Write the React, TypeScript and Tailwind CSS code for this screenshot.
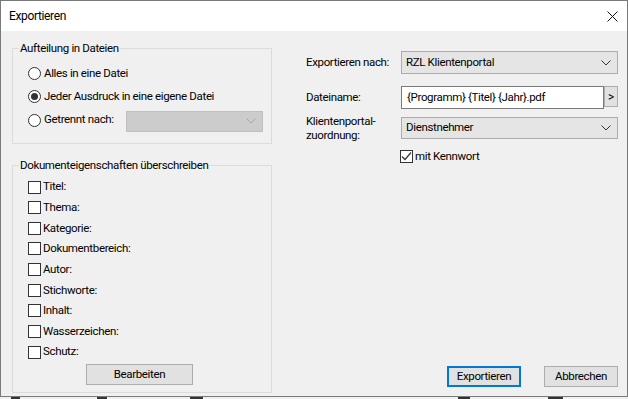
import React from 'react';

const font = { fontFamily: 'Roboto, "Liberation Sans", sans-serif' };

const Chevron: React.FC<{ color?: string }> = ({ color = '#333' }) => (
  <svg width="10" height="6" viewBox="0 0 10 6" className="shrink-0">
    <polyline points="0.5,0.5 5,5 9.5,0.5" fill="none" stroke={color} strokeWidth="1" />
  </svg>
);

const Radio: React.FC<{ checked?: boolean; label: string }> = ({ checked, label }) => (
  <div className="flex items-center gap-[3px]">
    <span className="w-[13px] h-[13px] rounded-full border border-[#333] bg-white flex items-center justify-center shrink-0">
      {checked && <span className="w-[7px] h-[7px] rounded-full bg-[#333]" />}
    </span>
    <span>{label}</span>
  </div>
);

const Check: React.FC<{ checked?: boolean; label: string }> = ({ checked, label }) => (
  <div className="flex items-center gap-[2px]">
    <span className="w-[13px] h-[13px] border border-[#333] bg-white shrink-0 flex items-center justify-center">
      {checked && (
        <svg width="11" height="11" viewBox="0 0 11 11">
          <polyline points="1,5.5 4,8.5 10,1.5" fill="none" stroke="#333" strokeWidth="1.2" />
        </svg>
      )}
    </span>
    <span>{label}</span>
  </div>
);

const props = ['Titel:', 'Thema:', 'Kategorie:', 'Dokumentbereich:', 'Autor:', 'Stichworte:', 'Inhalt:', 'Wasserzeichen:', 'Schutz:'];

const App: React.FC = () => {
  return (
    <div className="w-[628px] h-[399px] bg-[#f0f0f0] text-[11.5px] tracking-[-0.35px] text-black flex flex-col" style={font}>
      <div className="h-[397px] border border-[#7a7a7a] flex flex-col">
        {/* Title bar */}
        <div className="h-[30px] bg-white flex items-center justify-between pl-[8px] pr-[9px] text-[12px]">
          <span>Exportieren</span>
          <svg width="11" height="11" viewBox="0 0 11 11">
            <path d="M0.5 0.5 L10.5 10.5 M10.5 0.5 L0.5 10.5" stroke="#111" strokeWidth="1" />
          </svg>
        </div>

        <div className="flex-1 flex bg-[#f0f0f0]">
          {/* Left column */}
          <div className="pl-[11px] w-[271px] flex flex-col">
            <div className="relative mt-[17px] h-[96px] border border-[#dcdcdc] pt-[13px] pl-[15px]">
              <span className="absolute -top-[8px] left-[6px] px-[1px] bg-[#f0f0f0] leading-[15px]">Aufteilung in Dateien</span>
              <div className="h-[23px] flex items-center"><Radio label="Alles in eine Datei" /></div>
              <div className="h-[23px] flex items-center"><Radio checked label="Jeder Ausdruck in eine eigene Datei" /></div>
              <div className="h-[24px] flex items-center">
                <div className="w-[98px]"><Radio label="Getrennt nach:" /></div>
                <div className="mt-[2px] w-[137px] h-[21px] bg-[#cccccc] border border-[#bfbfbf] flex items-center justify-end pr-[6px]">
                  <Chevron color="#a6a6a6" />
                </div>
              </div>
            </div>

            <div className="relative mt-[21px] h-[228px] border border-[#dcdcdc] pt-[10.7px] pl-[15px] flex flex-col">
              <span className="absolute -top-[8px] left-[6px] px-[1px] bg-[#f0f0f0] leading-[15px]">Dokumenteigenschaften überschreiben</span>
              {props.map(p => (
                <div key={p} className="h-[20.625px] flex items-center"><Check label={p} /></div>
              ))}
              <button className="mt-[2px] ml-[58px] w-[107px] h-[21px] bg-[#e1e1e1] border border-[#adadad] flex items-center justify-center">
                Bearbeiten
              </button>
            </div>
          </div>

          {/* Right column */}
          <div className="flex-1 flex flex-col pl-[34px] pr-[9px] pb-[9px]">
            <div className="mt-[20px] flex items-center">
              <span className="w-[95px]">Exportieren nach:</span>
              <div className="flex-1 h-[23px] bg-[#e5e5e5] border border-[#acacac] flex items-center justify-between pl-[4px] pr-[6px]">
                <span>RZL Klientenportal</span>
                <Chevron />
              </div>
            </div>

            <div className="mt-[12px] flex items-center">
              <span className="w-[95px]">Dateiname:</span>
              <div className="flex-1 h-[23px] bg-white border border-[#7a7a7a] flex items-center pl-[5px]">
                {'{Programm} {Titel} {Jahr}.pdf'}
              </div>
              <div className="w-[14px] h-[21px] self-start bg-[#e1e1e1] border border-[#adadad] flex items-center justify-center text-[12px]">&gt;</div>
            </div>

            <div className="mt-[8px] flex items-start">
              <span className="w-[95px] leading-[14px] -mt-[3px]">Klientenportal-<br />zuordnung:</span>
              <div className="flex-1 h-[22px] bg-[#e5e5e5] border border-[#acacac] flex items-center justify-between pl-[4px] pr-[6px]">
                <span>Dienstnehmer</span>
                <Chevron />
              </div>
            </div>

            <div className="mt-[8px] pl-[94px] h-[13px] flex items-center">
              <Check checked label="mit Kennwort" />
            </div>

            <div className="mt-auto flex justify-end gap-[23px]">
              <button className="w-[74px] h-[21px] bg-[#e1e1e1] border-2 border-[#0078d7] flex items-center justify-center">Exportieren</button>
              <button className="w-[74px] h-[21px] bg-[#e1e1e1] border border-[#adadad] flex items-center justify-center">Abbrechen</button>
            </div>
          </div>
        </div>
      </div>

      {/* background peeking below the window */}
      <div className="h-[2px] flex">
        <span className="ml-[11px] w-[9px] bg-[#333]" />
        <span className="ml-[77px] w-[10px] bg-[#333]" />
        <span className="ml-[83px] w-[13px] bg-[#333]" />
        <span className="ml-[255px] w-[12px] bg-[#333]" />
        <span className="ml-[78px] w-[15px] bg-[#333]" />
      </div>
    </div>
  );
};

export default App;
